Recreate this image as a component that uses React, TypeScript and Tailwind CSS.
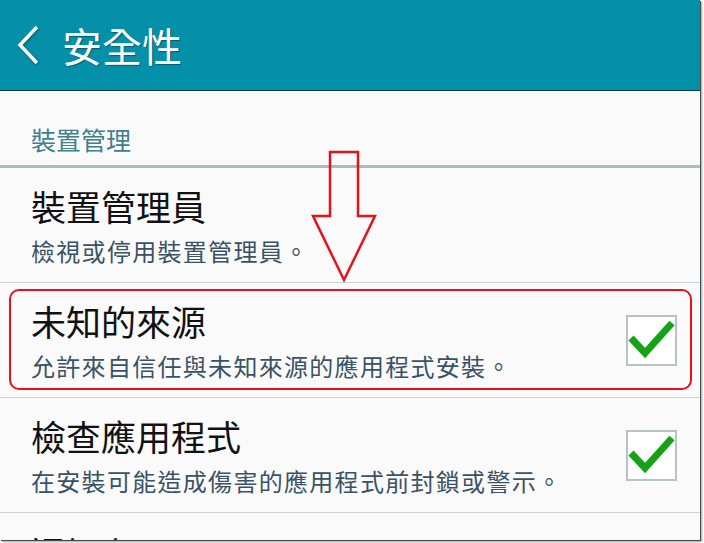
const cjk = "font-['Noto_Sans_CJK_TC','Noto_Sans_CJK_SC',sans-serif]";

type Item = {
  title: string;
  desc: string;
  checked?: boolean;
  marked?: boolean;
};

const items: Item[] = [
  { title: '裝置管理員', desc: '檢視或停用裝置管理員。' },
  { title: '未知的來源', desc: '允許來自信任與未知來源的應用程式安裝。', checked: true, marked: true },
  { title: '檢查應用程式', desc: '在安裝可能造成傷害的應用程式前封鎖或警示。', checked: true },
];

function CheckBox() {
  return (
    <div className="w-[51px] h-[51px] border-2 border-[#b5c3c8] bg-white flex-shrink-0">
      <svg width="47" height="47" viewBox="0 0 47 47">
        <polyline points="3,21 17,36 44,6" fill="none" stroke="#16a216" strokeWidth="7" />
      </svg>
    </div>
  );
}

function Row({ item }: { item: Item }) {
  return (
    <div className="relative h-[115px] border-b border-[#cdd4d9] flex items-center pl-[31px] pr-[23px]">
      <div className="flex-1">
        <div className="text-[35px] leading-none text-[#111]">{item.title}</div>
        <div className="mt-[16px] text-[24px] leading-none tracking-[1.3px] text-[#3a5266]">{item.desc}</div>
      </div>
      {item.checked && <CheckBox />}
      {item.marked && (
        <div className="absolute left-[9px] right-[8px] top-[6px] h-[101px] border-2 border-[#e6121b] rounded-[10px]" />
      )}
    </div>
  );
}

export default function App() {
  return (
    <div className={`w-[704px] h-[543px] bg-white ${cjk}`}>
      <div className="relative w-[700px] h-[540px] overflow-hidden bg-[#fafafa] shadow-[1px_1px_0_#4a4a4a,2px_2px_2px_#a0a0a0]">
        <header className="h-[91px] bg-[#0590aa] border-b border-[#0d3a48] flex items-center">
          <svg width="30" height="44" viewBox="0 0 30 44" className="ml-[14px] drop-shadow-[1px_1px_1px_rgba(0,0,0,0.35)]">
            <polyline points="23,4 6,22 23,40" fill="none" stroke="#fff" strokeWidth="3.5" />
          </svg>
          <div className="ml-[18px] text-[40px] leading-none text-white [text-shadow:1px_1px_1px_rgba(0,0,0,0.35)]">
            安全性
          </div>
        </header>

        <div className="h-[74px] pl-[31px] pt-[36px]">
          <div className="text-[25px] leading-none text-[#3f7f8e]">裝置管理</div>
        </div>
        <div className="h-[3px] bg-[#a8bcc3]" />

        {items.map((item) => (
          <Row key={item.title} item={item} />
        ))}

        <div className="pl-[31px] pt-[22px]">
          <div className="text-[35px] leading-none text-[#111]">通知存取</div>
        </div>

        <svg className="absolute left-0 top-0 pointer-events-none" width="700" height="540">
          <polygon
            points="330,152 358,152 358,216 375,216 344,280 313,216 330,216"
            fill="none"
            stroke="#e6121b"
            strokeWidth="2.5"
          />
        </svg>
      </div>
    </div>
  );
}
